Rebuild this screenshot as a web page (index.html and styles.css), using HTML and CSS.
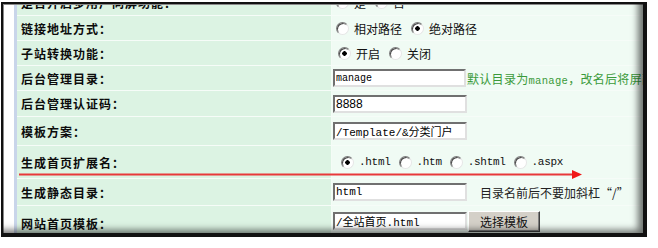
FILE: index.html
```html
<!DOCTYPE html>
<html lang="zh-CN">
<head>
    <meta charset="UTF-8">
    <title>站点设置</title>
    <link rel="stylesheet" href="styles.css">
</head>
<body>
    <div class="shot">
        <div class="view">
            <div class="list">
                <div class="row h25">
                    <div class="label">是否开启多用户同屏功能：</div>
                    <div class="value opts">
                        <label class="opt"><input type="radio" class="radio" name="multi">是</label>
                        <label class="opt"><input type="radio" class="radio" name="multi" checked>否</label>
                    </div>
                </div>
                <div class="row h24">
                    <div class="label">链接地址方式：</div>
                    <div class="value opts">
                        <label class="opt"><input type="radio" class="radio" name="link">相对路径</label>
                        <label class="opt"><input type="radio" class="radio" name="link" checked>绝对路径</label>
                    </div>
                </div>
                <div class="row h24">
                    <div class="label">子站转换功能：</div>
                    <div class="value opts opts-b">
                        <label class="opt"><input type="radio" class="radio" name="sub" checked>开启</label>
                        <label class="opt"><input type="radio" class="radio" name="sub">关闭</label>
                    </div>
                </div>
                <div class="row h24">
                    <div class="label">后台管理目录：</div>
                    <div class="value">
                        <input type="text" class="txt" value="manage">
                        <span class="hint">默认目录为<span class="mono">manage</span>，改名后将屏蔽原目录访问</span>
                    </div>
                </div>
                <div class="row h25">
                    <div class="label">后台管理认证码：</div>
                    <div class="value">
                        <input type="text" class="txt sans" value="8888">
                    </div>
                </div>
                <div class="row h28">
                    <div class="label">模板方案：</div>
                    <div class="value">
                        <input type="text" class="txt mix" value="/Template/&amp;分类门户">
                    </div>
                </div>
                <div class="row h32">
                    <div class="label">生成首页扩展名：</div>
                    <div class="value opts exts">
                        <label class="opt"><input type="radio" class="radio" name="ext" checked><span class="mono">.html</span></label>
                        <label class="opt"><input type="radio" class="radio" name="ext"><span class="mono">.htm</span></label>
                        <label class="opt"><input type="radio" class="radio" name="ext"><span class="mono">.shtml</span></label>
                        <label class="opt"><input type="radio" class="radio" name="ext"><span class="mono">.aspx</span></label>
                    </div>
                </div>
                <div class="row h26">
                    <div class="label">生成静态目录：</div>
                    <div class="value">
                        <input type="text" class="txt mix" value="html">
                        <span class="tip">目录名前后不要加斜杠“/”</span>
                    </div>
                </div>
                <div class="row h30 last">
                    <div class="label">网站首页模板：</div>
                    <div class="value">
                        <input type="text" class="txt mix" value="/全站首页.html">
                        <button class="btn">选择模板</button>
                    </div>
                </div>
            </div>
        </div>
        <!-- red annotation arrow drawn over the table -->
        <svg class="arrow" width="570" height="10" viewBox="0 0 570 10">
            <line x1="0" y1="4.5" x2="556" y2="4.5" stroke="#e8383a" stroke-width="2"/>
            <polygon points="553,0 563,4.5 553,9" fill="#f01818"/>
        </svg>
    </div>
</body>
</html>
```

FILE: styles.css
```css
body {
    margin: 0;
    background: #fff;
    font-family: "Noto Sans CJK SC", sans-serif;
    font-size: 12px;
    color: #111;
}
.shot {
    position: relative;
    width: 640px;
    height: 229px;
    margin: 2px 0 0 1px;
    border: 2px solid #111;
    border-right-width: 4px;
    border-bottom-width: 4px;
    overflow: hidden;
    background: #fff;
}
.shot::after {
    content: "";
    position: absolute;
    inset: 0;
    pointer-events: none;
    box-shadow: inset -9px -7px 7px -4px rgba(0, 0, 0, 0.55),
                inset 1px 1px 0 #8a8a8a;
}
.view {
    height: 100%;
    padding-left: 11px;
    overflow: hidden;
}
.list {
    margin-top: -14px;
    border-left: 3px solid #c9d5ea;
}
.row {
    display: grid;
    grid-template-columns: 315px 1fr;
    border-bottom: 1px solid #f6fcf8;
}
.h24 { height: 24px; }
.h25 { height: 25px; }
.h26 { height: 26px; }
.h28 { height: 28px; }
.h30 { height: 30px; }
.h32 { height: 32px; }
.label {
    box-sizing: border-box;
    display: flex;
    align-items: center;
    padding-left: 4px;
    background: #dcf3e3;
    border-right: 1px solid #f4fcf6;
    font-weight: 700;
    letter-spacing: 1px;
    color: #0c0c0c;
}
.last .label {
    padding-top: 4px;
}
.value {
    display: flex;
    align-items: center;
    padding-left: 1px;
    background: #f0fbf4;
    white-space: nowrap;
    overflow: hidden;
}
.opts {
    padding-left: 4px;
}
.opts-b {
    padding-left: 6px;
}
.exts {
    padding-left: 9px;
}
.opt {
    display: inline-flex;
    align-items: center;
    margin-right: 9px;
    color: #111;
}
.exts .opt {
    margin-right: 8px;
}
.radio {
    appearance: none;
    width: 13px;
    height: 13px;
    margin: 0 5px 0 0;
    border-radius: 50%;
    border: 1px solid;
    border-color: #7c7c7c #e6e6e6 #e6e6e6 #7c7c7c;
    background: #fff;
    box-shadow: inset 1px 1px 0 #4a4a4a;
}
.radio:checked {
    background: radial-gradient(circle, #000 0 2px, #fff 2.5px);
}
.mono {
    font-family: "Liberation Mono", monospace;
    font-size: 10px;
}
.exts .mono {
    font-size: 11px;
    letter-spacing: -0.3px;
}
.txt {
    box-sizing: border-box;
    width: 134px;
    height: 18px;
    margin: 0;
    padding: 0 1px;
    border: 2px solid;
    border-color: #707070 #e0e0e0 #e0e0e0 #707070;
    background: #fff;
    color: #000;
    font-family: "Liberation Mono", monospace;
    font-size: 10px;
}
.txt.sans {
    font-family: "Liberation Sans", Arial, sans-serif;
    font-size: 12px;
}
.txt.mix {
    font-family: "Liberation Mono", "Noto Sans CJK SC", monospace;
    font-size: 11px;
}
.hint {
    margin-left: 1px;
    color: #3a9a3a;
    letter-spacing: 0.3px;
}
.hint .mono {
    font-size: 10.5px;
}
.tip {
    margin-left: 13px;
    color: #222;
}
.btn {
    box-sizing: border-box;
    width: 72px;
    height: 21px;
    margin: 0 0 0 1px;
    padding: 0;
    background: #d4d0c8;
    border: 1px solid;
    border-color: #fff #404040 #404040 #fff;
    box-shadow: inset -1px -1px 0 #808080;
    font-family: "Noto Sans CJK SC", sans-serif;
    font-size: 12px;
    color: #111;
}
.arrow {
    position: absolute;
    left: 16px;
    top: 166px;
}
```
